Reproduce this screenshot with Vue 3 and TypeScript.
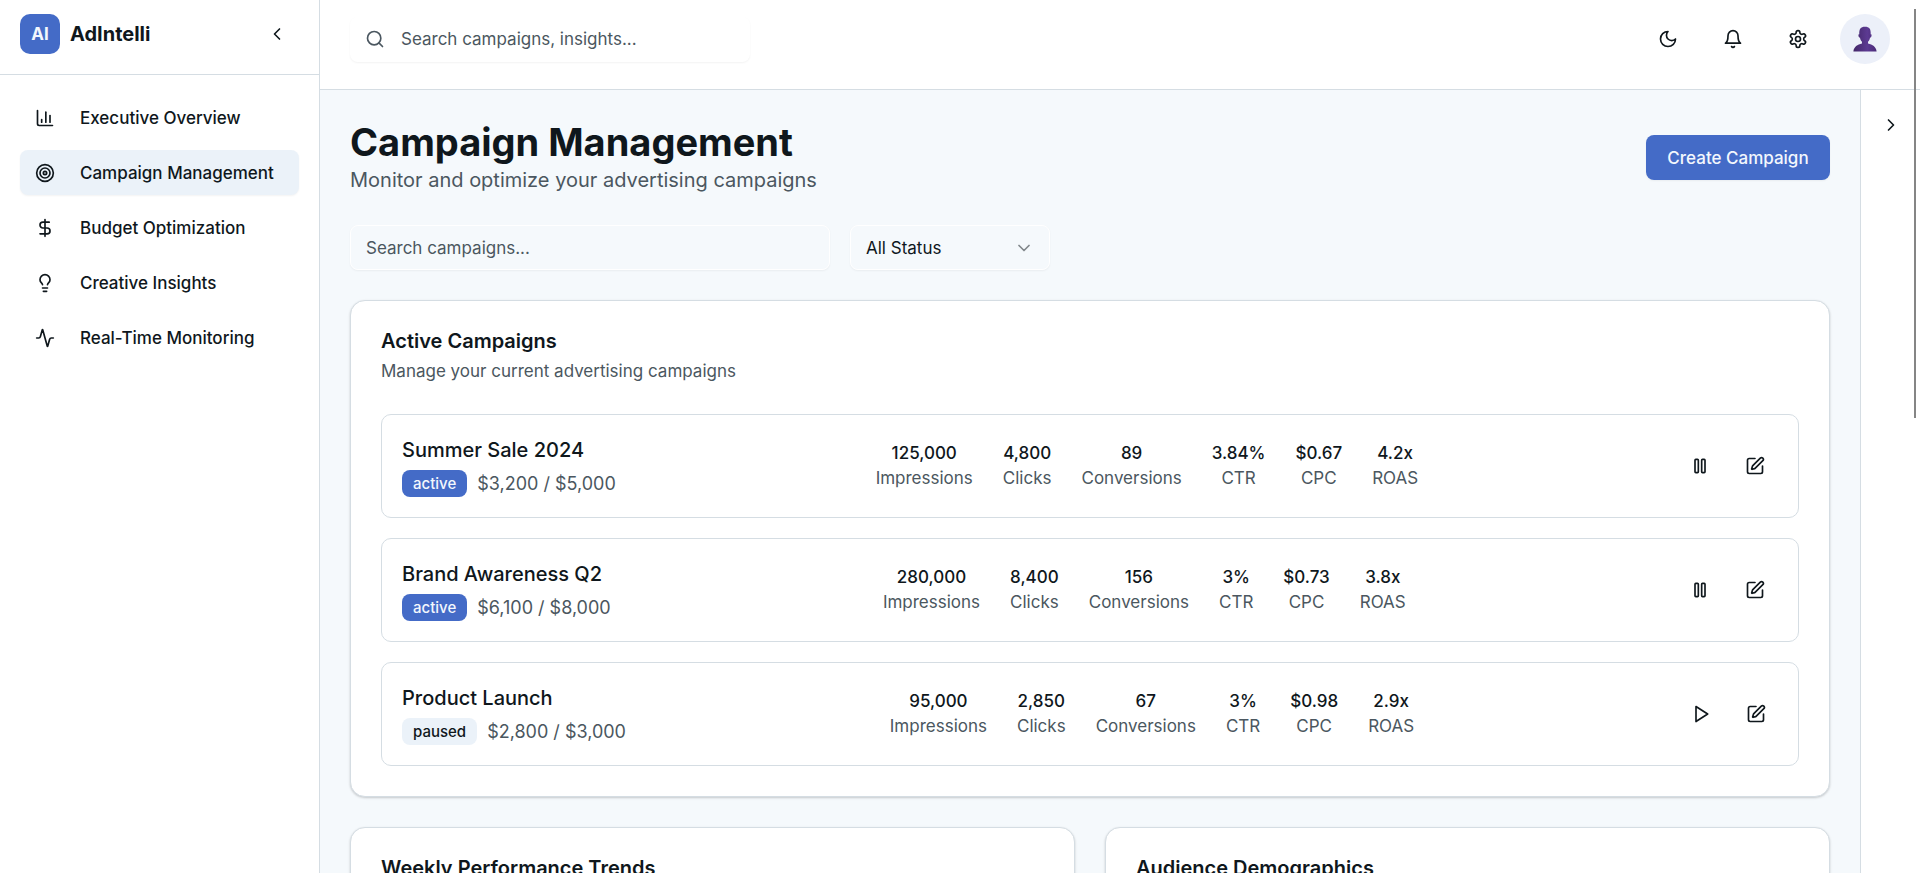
<script setup lang="ts">
import { ref, computed } from 'vue'

interface NavItem { label: string; icon: string[]; circles?: number[] }
interface Campaign {
  name: string
  status: 'active' | 'paused'
  spent: number
  budget: number
  impressions: number
  clicks: number
  conversions: number
  ctr: number
  cpc: number
  roas: number
}

const nav: NavItem[] = [
  { label: 'Executive Overview', icon: ['M3 3v16a2 2 0 0 0 2 2h16', 'M18 17V9', 'M13 17V5', 'M8 17v-3'] },
  { label: 'Campaign Management', icon: [], circles: [10, 6, 2] },
  { label: 'Budget Optimization', icon: ['M12 2v20', 'M17 5H9.5a3.5 3.5 0 0 0 0 7h5a3.5 3.5 0 0 1 0 7H6'] },
  {
    label: 'Creative Insights',
    icon: ['M15 14c.2-1 .7-1.7 1.5-2.5 1-.9 1.5-2.2 1.5-3.5A6 6 0 0 0 6 8c0 1 .2 2.2 1.5 3.5.7.7 1.3 1.5 1.5 2.5', 'M9 18h6', 'M10 22h4'],
  },
  {
    label: 'Real-Time Monitoring',
    icon: ['M22 12h-2.48a2 2 0 0 0-1.93 1.46l-2.35 8.36a.25.25 0 0 1-.48 0L9.24 2.18a.25.25 0 0 0-.48 0l-2.35 8.36A2 2 0 0 1 4.49 12H2'],
  },
]
const current = ref('Campaign Management')

const campaigns = ref<Campaign[]>([
  { name: 'Summer Sale 2024', status: 'active', spent: 3200, budget: 5000, impressions: 125000, clicks: 4800, conversions: 89, ctr: 3.84, cpc: 0.67, roas: 4.2 },
  { name: 'Brand Awareness Q2', status: 'active', spent: 6100, budget: 8000, impressions: 280000, clicks: 8400, conversions: 156, ctr: 3, cpc: 0.73, roas: 3.8 },
  { name: 'Product Launch', status: 'paused', spent: 2800, budget: 3000, impressions: 95000, clicks: 2850, conversions: 67, ctr: 3, cpc: 0.98, roas: 2.9 },
])

const query = ref('')
const globalQuery = ref('')
const status = ref('all')

const shown = computed(() =>
  campaigns.value.filter(
    (c) =>
      c.name.toLowerCase().includes(query.value.toLowerCase()) &&
      (status.value === 'all' || c.status === status.value),
  ),
)

const num = (n: number): string => n.toLocaleString('en-US')

function metrics(c: Campaign): { label: string; value: string }[] {
  return [
    { label: 'Impressions', value: num(c.impressions) },
    { label: 'Clicks', value: num(c.clicks) },
    { label: 'Conversions', value: num(c.conversions) },
    { label: 'CTR', value: `${c.ctr}%` },
    { label: 'CPC', value: `$${c.cpc}` },
    { label: 'ROAS', value: `${c.roas}x` },
  ]
}

function toggle(c: Campaign): void {
  c.status = c.status === 'active' ? 'paused' : 'active'
}
</script>

<template>
  <div class="app">
    <aside class="sidebar">
      <div class="brand">
        <span class="logo">AI</span>
        <span class="brand-name">AdIntelli</span>
        <button class="icon-btn" type="button" aria-label="Collapse sidebar">
          <svg class="icon" viewBox="0 0 24 24"><path d="m15 18-6-6 6-6" /></svg>
        </button>
      </div>
      <nav class="nav">
        <button
          v-for="item in nav"
          :key="item.label"
          type="button"
          class="nav-item"
          :class="{ selected: item.label === current }"
          @click="current = item.label"
        >
          <svg class="icon" viewBox="0 0 24 24">
            <circle v-for="r in item.circles" :key="r" cx="12" cy="12" :r="r" />
            <path v-for="d in item.icon" :key="d" :d="d" />
          </svg>
          {{ item.label }}
        </button>
      </nav>
    </aside>

    <div class="body">
      <header class="topbar">
        <label class="global-search">
          <svg class="icon" viewBox="0 0 24 24"><circle cx="11" cy="11" r="8" /><path d="m21 21-4.3-4.3" /></svg>
          <input v-model="globalQuery" type="text" placeholder="Search campaigns, insights..." aria-label="Search campaigns and insights" />
        </label>
        <div class="tools">
          <button class="icon-btn" type="button" aria-label="Toggle theme">
            <svg class="icon" viewBox="0 0 24 24"><path d="M12 3a6 6 0 0 0 9 9 9 9 0 1 1-9-9Z" /></svg>
          </button>
          <button class="icon-btn" type="button" aria-label="Notifications">
            <svg class="icon" viewBox="0 0 24 24">
              <path d="M6 8a6 6 0 0 1 12 0c0 7 3 9 3 9H3s3-2 3-9" /><path d="M10.3 21a1.94 1.94 0 0 0 3.4 0" />
            </svg>
          </button>
          <button class="icon-btn" type="button" aria-label="Settings">
            <svg class="icon" viewBox="0 0 24 24">
              <path d="M12.22 2h-.44a2 2 0 0 0-2 2v.18a2 2 0 0 1-1 1.73l-.43.25a2 2 0 0 1-2 0l-.15-.08a2 2 0 0 0-2.73.73l-.22.38a2 2 0 0 0 .73 2.73l.15.1a2 2 0 0 1 1 1.72v.51a2 2 0 0 1-1 1.74l-.15.09a2 2 0 0 0-.73 2.73l.22.38a2 2 0 0 0 2.73.73l.15-.08a2 2 0 0 1 2 0l.43.25a2 2 0 0 1 1 1.73V20a2 2 0 0 0 2 2h.44a2 2 0 0 0 2-2v-.18a2 2 0 0 1 1-1.73l.43-.25a2 2 0 0 1 2 0l.15.08a2 2 0 0 0 2.73-.73l.22-.39a2 2 0 0 0-.73-2.73l-.15-.08a2 2 0 0 1-1-1.74v-.5a2 2 0 0 1 1-1.74l.15-.09a2 2 0 0 0 .73-2.73l-.22-.38a2 2 0 0 0-2.73-.73l-.15.08a2 2 0 0 1-2 0l-.43-.25a2 2 0 0 1-1-1.73V4a2 2 0 0 0-2-2z" />
              <circle cx="12" cy="12" r="3" />
            </svg>
          </button>
          <button class="avatar" type="button" aria-label="Account">
            <svg viewBox="0 0 24 26" aria-hidden="true">
              <defs>
                <linearGradient id="figure" x1="0" x2="1" y1="0" y2="0">
                  <stop offset="0" stop-color="#432768" />
                  <stop offset="0.6" stop-color="#5c3a92" />
                  <stop offset="1" stop-color="#4b2b78" />
                </linearGradient>
              </defs>
              <path fill="url(#figure)" d="M0.4 25.6c.3-4.6 4.2-7.2 8.6-8v-1.8c-1.1-1-1.7-2.4-2-4-.9-.1-1.9-1.4-1.5-3 .1-.4.5-.5.8-.4C6 3 7.600.8 12 .8s6 2.200 5.700 7.600c.3-.1.700 0 .8.4.4 1.600-.6 2.900-1.500 3-.3 1.600-.9 3-2 4v1.800c4.400.8 8.300 3.400 8.600 8z" />
            </svg>
          </button>
        </div>
      </header>

      <div class="workspace">
        <main class="content">
          <div class="page-head">
            <div>
              <h1>Campaign Management</h1>
              <p>Monitor and optimize your advertising campaigns</p>
            </div>
            <button class="primary" type="button">Create Campaign</button>
          </div>

          <div class="filters">
            <input v-model="query" class="field" type="text" placeholder="Search campaigns..." aria-label="Search campaigns" />
            <div class="select">
              <select v-model="status" class="field" aria-label="Status">
                <option value="all">All Status</option>
                <option value="active">Active</option>
                <option value="paused">Paused</option>
              </select>
              <svg class="icon" viewBox="0 0 24 24"><path d="m6 9 6 6 6-6" /></svg>
            </div>
          </div>

          <section class="card">
            <h2>Active Campaigns</h2>
            <p class="card-note">Manage your current advertising campaigns</p>
            <ul class="campaigns">
              <li v-for="c in shown" :key="c.name" class="campaign">
                <div>
                  <h3>{{ c.name }}</h3>
                  <div class="meta">
                    <span class="badge" :class="c.status">{{ c.status }}</span>
                    <span class="budget">${{ num(c.spent) }} / ${{ num(c.budget) }}</span>
                  </div>
                </div>
                <dl class="metrics">
                  <div v-for="m in metrics(c)" :key="m.label" class="metric">
                    <dt>{{ m.label }}</dt>
                    <dd>{{ m.value }}</dd>
                  </div>
                </dl>
                <div class="actions">
                  <button class="icon-btn" type="button" :aria-label="c.status === 'active' ? 'Pause' : 'Resume'" @click="toggle(c)">
                    <svg v-if="c.status === 'active'" class="icon" viewBox="0 0 24 24">
                      <rect x="14" y="4" width="4" height="16" rx="1" /><rect x="6" y="4" width="4" height="16" rx="1" />
                    </svg>
                    <svg v-else class="icon" viewBox="0 0 24 24"><polygon points="6 3 20 12 6 21 6 3" /></svg>
                  </button>
                  <button class="icon-btn" type="button" aria-label="Edit">
                    <svg class="icon" viewBox="0 0 24 24">
                      <path d="M12 3H5a2 2 0 0 0-2 2v14a2 2 0 0 0 2 2h14a2 2 0 0 0 2-2v-7" />
                      <path d="M18.375 2.625a1 1 0 0 1 3 3l-9.013 9.014a2 2 0 0 1-.853.505l-2.873.84a.5.5 0 0 1-.62-.62l.84-2.873a2 2 0 0 1 .506-.852z" />
                    </svg>
                  </button>
                </div>
              </li>
            </ul>
          </section>

          <div class="charts">
            <section class="card"><h2>Weekly Performance Trends</h2></section>
            <section class="card"><h2>Audience Demographics</h2></section>
          </div>
        </main>

        <aside class="insights">
          <button class="icon-btn" type="button" aria-label="Toggle insights panel">
            <svg class="icon" viewBox="0 0 24 24"><path d="m9 18 6-6-6-6" /></svg>
          </button>
        </aside>
      </div>
    </div>
    <div class="scroll-thumb"></div>
  </div>
</template>

<style>
body {
  margin: 0;
  overflow: hidden;
}
</style>

<style scoped>
.app {
  --ink: #0f171c;
  --muted: #4b5760;
  --line: #d5dde3;
  --accent: #446bc7;
  --tint: #ebf2f9;
  position: relative;
  display: flex;
  height: 100vh;
  overflow: hidden;
  background: #fff;
  color: var(--ink);
  font-family: Inter, "Liberation Sans", sans-serif;
  font-size: 17px;
  line-height: 25px;
}
*, *::before, *::after { box-sizing: border-box; }
h1, h2, h3, p, ul, dl, dd { margin: 0; padding: 0; }
button, input, select { font: inherit; color: inherit; }
button { border: 0; background: none; padding: 0; cursor: pointer; }
.icon {
  flex: none;
  width: 20px;
  height: 20px;
  fill: none;
  stroke: currentColor;
  stroke-width: 2;
  stroke-linecap: round;
  stroke-linejoin: round;
}
.icon-btn {
  display: flex;
  align-items: center;
  justify-content: center;
  width: 45px;
  height: 45px;
  border-radius: 8px;
}

.sidebar {
  flex: none;
  width: 320px;
  border-right: 1px solid var(--line);
}
.brand {
  display: flex;
  align-items: center;
  gap: 10px;
  height: 75px;
  padding: 14px 20px 20px;
  border-bottom: 1px solid var(--line);
}
.logo {
  display: flex;
  align-items: center;
  justify-content: center;
  width: 40px;
  height: 40px;
  border-radius: 10px;
  background: var(--accent);
  color: #f3f7fd;
  font-weight: 700;
}
.brand-name { flex: 1; font-size: 20px; font-weight: 700; }
.nav { display: grid; gap: 10px; padding: 20px; }
.nav-item {
  display: flex;
  align-items: center;
  gap: 25px;
  height: 45px;
  padding: 0 15px;
  border-radius: 8px;
  font-weight: 500;
  line-height: 26px;
  white-space: nowrap;
}
.nav-item.selected { background: var(--tint); box-shadow: 0 1px 2px rgb(0 0 0 / 5%); }

.body { flex: 1; min-width: 0; display: flex; flex-direction: column; }
.topbar {
  flex: none;
  display: flex;
  align-items: center;
  justify-content: space-between;
  padding: 14px 30px 25px;
  border-bottom: 1px solid var(--line);
}
.global-search {
  display: flex;
  align-items: center;
  gap: 16px;
  width: 400px;
  height: 45px;
  padding: 0 15px;
  border-radius: 8px;
  box-shadow: 0 1px 2px rgb(0 0 0 / 5%);
  color: var(--muted);
}
.global-search input { flex: 1; min-width: 0; border: 0; outline: 0; padding: 0; background: none; }
input::placeholder { color: var(--muted); opacity: 1; }
.tools { display: flex; align-items: center; gap: 20px; }
.avatar {
  display: flex;
  align-items: center;
  justify-content: center;
  width: 50px;
  height: 50px;
  border-radius: 50%;
  background: #ecf0f9;
}
.avatar svg { width: 24px; height: 26px; }

.workspace { flex: 1; min-height: 0; display: flex; }
.content {
  flex: 1;
  min-width: 0;
  display: flex;
  flex-direction: column;
  gap: 30px;
  padding: 30px;
  overflow: hidden;
  background: #f5f9fc;
}
.page-head { display: flex; align-items: center; justify-content: space-between; }
h1 { font-size: 38px; line-height: 45px; font-weight: 700; }
.page-head p { font-size: 20px; line-height: 30px; color: var(--muted); }
.primary {
  height: 45px;
  min-width: 184px;
  padding: 0 20px;
  border-radius: 8px;
  background: var(--accent);
  color: #f3f7fd;
  font-weight: 500;
  line-height: 26px;
  box-shadow: 0 1px 2px rgb(0 0 0 / 5%);
}
.filters { display: flex; gap: 20px; }
.field {
  width: 480px;
  height: 45px;
  padding: 0 15px;
  border: 1px solid #fff;
  border-radius: 8px;
  outline: 0;
  background: transparent;
  line-height: 26px;
  box-shadow: 0 1px 2px rgb(0 0 0 / 5%);
}
.select { display: grid; align-items: center; width: 200px; }
.select > * { grid-area: 1 / 1; }
.select .field { width: 100%; appearance: none; }
.select .icon { justify-self: end; margin-right: 16px; opacity: 0.5; pointer-events: none; }

.card {
  flex: none;
  padding: 30px;
  border: 1px solid var(--line);
  border-radius: 15px;
  background: #fff;
  box-shadow: 0 1px 3px rgb(0 0 0 / 10%), 0 1px 2px rgb(0 0 0 / 10%);
}
h2 { font-size: 20px; line-height: 20px; font-weight: 600; }
.card-note { margin-top: 8px; color: var(--muted); }
.campaigns { display: grid; gap: 20px; margin-top: 30px; list-style: none; }
.campaign {
  display: flex;
  align-items: center;
  justify-content: space-between;
  padding: 20px;
  border: 1px solid var(--line);
  border-radius: 10px;
}
h3 { font-size: 20px; line-height: 30px; font-weight: 500; }
.meta { display: flex; align-items: center; gap: 10px; margin-top: 5px; }
.badge {
  padding: 1px 11px;
  border-radius: 8px;
  font-size: 15px;
  font-weight: 500;
}
.badge.active { background: var(--accent); color: #f3f7fd; }
.badge.paused { background: var(--tint); }
.budget { font-size: 18px; color: var(--muted); }
.metrics { display: flex; gap: 30px; text-align: center; }
.metric { display: flex; flex-direction: column-reverse; }
.metric dt { color: var(--muted); }
.metric dd { font-weight: 500; }
.actions { display: flex; gap: 10px; }
.charts { display: grid; grid-template-columns: 1fr 1fr; gap: 30px; }
.charts .card { min-height: 400px; }

.insights {
  flex: none;
  width: 60px;
  padding: 12px 7px;
  border-left: 1px solid var(--line);
}
.scroll-thumb {
  position: absolute;
  top: 9px;
  right: 4px;
  width: 2px;
  height: 409px;
  background: #858585;
}
</style>
